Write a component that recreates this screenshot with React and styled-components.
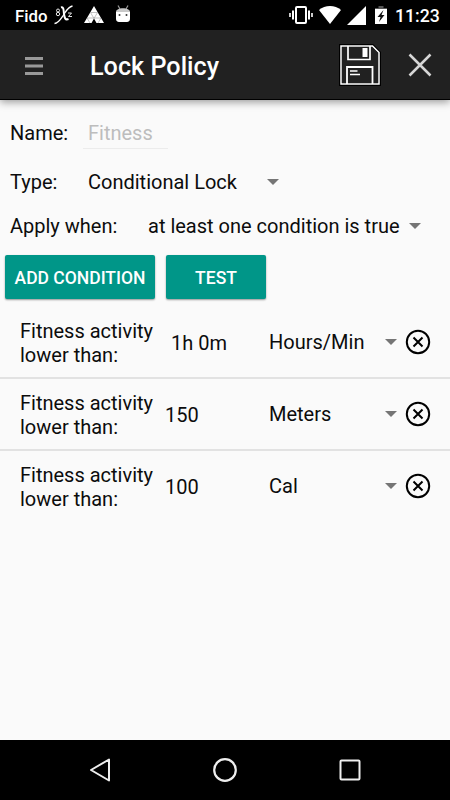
import React, { useState } from "react";
import styled, { createGlobalStyle } from "styled-components";

const GlobalStyle = createGlobalStyle`
    * {
        box-sizing: border-box;
    }
    body {
        margin: 0;
        background: #fafafa;
        font-family: Roboto, sans-serif;
    }
`;

const Screen = styled.div`
    width: 450px;
    height: 800px;
    display: flex;
    flex-direction: column;
    background: #fafafa;
    color: #0c0c0c;
    overflow: hidden;
`;

// Status bar
const StatusBar = styled.div`
    height: 30px;
    flex-shrink: 0;
    display: flex;
    align-items: center;
    padding: 0 10px 0 15px;
    background: #000;
    color: #fff;
    svg {
        display: block;
        flex-shrink: 0;
    }
`;

const Carrier = styled.span`
    width: 39px;
    font-size: 16.8px;
    font-weight: 500;
    line-height: 30px;
    white-space: nowrap;
    padding-top: 2px;
`;

const StatusIcons = styled.div`
    display: flex;
    align-items: center;
    margin-left: ${(props) => (props.$end ? "auto" : "0")};
    gap: ${(props) => props.$gap}px;
`;

const BatterySlot = styled.div`
    margin-left: 9px;
`;

const Clock = styled.span`
    width: 45px;
    margin-left: 8px;
    font-size: 17.7px;
    font-weight: 500;
    line-height: 30px;
    padding-top: 2px;
    white-space: nowrap;
`;

// Toolbar
const Toolbar = styled.header`
    height: 70px;
    flex-shrink: 0;
    display: flex;
    align-items: center;
    padding: 0 18px 0 25px;
    background: #212121;
    border-bottom: 1px solid #000;
    box-shadow: 0 2px 8px rgba(0, 0, 0, 0.4);
    z-index: 1;
`;

const Title = styled.h1`
    margin: 4px auto 0 47px;
    font-size: 25.2px;
    font-weight: 500;
    line-height: 30px;
    color: #fff;
`;

const IconButton = styled.button`
    display: flex;
    padding: 0;
    border: none;
    background: none;
    cursor: pointer;
    margin-left: ${(props) => props.$left || 0}px;
`;

// Form
const Main = styled.main`
    flex: 1;
    padding-top: 6px;
`;

const Field = styled.div`
    display: flex;
    align-items: center;
    height: ${(props) => props.$height || 44}px;
    padding-left: 10px;
    font-size: 20px;
    white-space: nowrap;
`;

const Label = styled.label`
    width: ${(props) => props.$width}px;
`;

const NameInput = styled.input`
    width: 85px;
    height: 32px;
    padding: 1px 0 0 5px;
    border: none;
    border-bottom: 1px solid #ececec;
    outline: none;
    background: none;
    font: 20px Roboto, sans-serif;
    color: #bdbdbd;
`;

const Select = styled.div`
    display: flex;
    align-items: center;
    justify-content: space-between;
    width: ${(props) => props.$width}px;
    font-size: 20px;
    white-space: nowrap;
    cursor: pointer;
`;

const Caret = styled.span`
    border: 6px solid transparent;
    border-top-color: #757575;
    border-bottom: none;
`;

const Actions = styled.div`
    display: flex;
    gap: 11px;
    padding: 7px 5px 6px;
`;

const ActionButton = styled.button`
    width: ${(props) => props.$width}px;
    height: 44px;
    padding: 2px 0 0;
    border: none;
    border-radius: 2px;
    background: #009688;
    color: #fff;
    font: 500 17.5px Roboto, sans-serif;
    white-space: nowrap;
    box-shadow: 0 1px 2px rgba(0, 0, 0, 0.4);
    cursor: pointer;
`;

// Conditions
const ConditionRow = styled.div`
    display: flex;
    align-items: center;
    height: 72px;
    padding-left: 20px;
    font-size: 20px;
    border-top: 2px solid transparent;
    & + & {
        border-top-color: #e2e2e2;
    }
`;

const ConditionName = styled.div`
    width: 145px;
    padding-top: 2px;
    line-height: 24px;
    white-space: pre-line;
`;

const ConditionValue = styled.div`
    width: 104px;
    padding-top: 2px;
    padding-left: ${(props) => (props.$indent ? 6 : 0)}px;
`;

// Navigation bar
const NavBar = styled.nav`
    height: 60px;
    flex-shrink: 0;
    display: flex;
    align-items: center;
    justify-content: space-between;
    padding: 0 87px;
    background: #000;
`;

const initialConditions = [
    { id: 1, value: "1h 0m", unit: "Hours/Min" },
    { id: 2, value: "150", unit: "Meters" },
    { id: 3, value: "100", unit: "Cal" },
];

function ChiIcon() {
    return (
        <svg width="19" height="20" viewBox="0 0 19 20" fill="none" stroke="#fff">
            <path d="M.5 18.500c4 0 6-4 9-8.500S14 2 18.500 1" strokeWidth="1.300" />
            <path d="M7 2.500c3-1 2.500 3 3 6.500s1 6.500 4.500 5" strokeWidth="2" />
            <circle cx="4" cy="5.500" r="1.500" strokeWidth=".9" />
            <circle cx="4" cy="9" r="1.700" strokeWidth=".9" />
            <path d="M14 8h3.500L14.500 11.500H18" strokeWidth=".9" />
        </svg>
    );
}

function TrianglesIcon() {
    return (
        <svg width="20" height="18" viewBox="0 0 20 18">
            <path d="M10 0 20 17H12.500L10 12.500 7.500 17H0z" fill="#fff" />
            <path d="M6.500 6.500 10 12.500l3.500-6zM3 12h7M17 12h-7M3 12l3 5M17 12l-3 5" fill="none" stroke="#999" strokeWidth=".6" />
        </svg>
    );
}

function AndroidIcon() {
    return (
        <svg width="16" height="20" viewBox="0 0 16 20">
            <path d="M3 .5 5 4M13 .5 11 4" stroke="#999" strokeWidth="1.200" />
            <path d="M1 7c0-5 14-5 14 0z" fill="#c8c8c8" />
            <path d="M1 7h14v6.500c0 4-3 3.500-7 3.500s-7 .5-7-3.500z" fill="#fff" />
            <circle cx="4.500" cy="10" r="1" fill="#333" />
            <circle cx="11.500" cy="10" r="1" fill="#333" />
        </svg>
    );
}

function VibrateIcon() {
    return (
        <svg width="24" height="18" viewBox="0 0 24 18" fill="none" stroke="#fff">
            <rect x="7" y="1" width="10" height="16" rx="1" strokeWidth="2" />
            <path d="M4 4.500v9M20 4.500v9" strokeWidth="2" />
            <path d="M1 7v4M23 7v4" strokeWidth="1.600" />
        </svg>
    );
}

function WifiIcon() {
    return (
        <svg width="22" height="18" viewBox="0 0 22 18" fill="#fff">
            <path d="M11 18 0 4C6-1.300 16-1.300 22 4z" />
        </svg>
    );
}

function SignalIcon() {
    return (
        <svg width="19" height="19" viewBox="0 0 19 19" fill="#fff">
            <path d="M19 0v19H0z" />
        </svg>
    );
}

function BatteryIcon() {
    return (
        <svg width="12" height="18" viewBox="0 0 12 18">
            <path d="M3.500 0h5v2H12v2H0V2h3.500z" fill="#555" />
            <path d="M0 3h12v15H0z" fill="#fff" />
            <path d="M8.500 4 2.500 11h3L4 16l5.500-7H6.500z" fill="#111" />
        </svg>
    );
}

function MenuIcon() {
    return (
        <svg width="18" height="20" viewBox="0 0 18 20" fill="#999">
            <path d="M0 2h18v3H0zM0 9.500h18v3H0zM0 17h18v3H0z" />
        </svg>
    );
}

function SaveIcon() {
    return (
        <svg width="42" height="42" viewBox="0 0 42 42" fill="none">
            <path d="M1.500 1.500h32L40.500 8.500v32h-39z" stroke="#000" strokeWidth="3" />
            <path d="M2 2h31.500L40 8.500V40H2z" stroke="#fff" strokeWidth="1.500" />
            <path d="M9 2v13.500h22V2" stroke="#fff" strokeWidth="1.700" />
            <path d="M23.500 4h5v9h-5z" fill="#fff" />
            <path d="M8 40V23h25.500v17" stroke="#fff" strokeWidth="1.800" />
            <path d="M11 27h7.500M11 30.500h10" stroke="#fff" strokeWidth="1.600" />
        </svg>
    );
}

function CloseIcon() {
    return (
        <svg width="24" height="24" viewBox="0 0 24 24">
            <path d="m1.500 1.500 21 21M22.500 1.500l-21 21" stroke="#d6d6d6" strokeWidth="2.500" />
        </svg>
    );
}

function RemoveIcon() {
    return (
        <svg width="26" height="26" viewBox="0 0 26 26" fill="none" stroke="#000" strokeWidth="2">
            <circle cx="13" cy="13" r="11.200" />
            <path d="m8.500 8.500 9 9M17.500 8.500l-9 9" />
        </svg>
    );
}

export default function App() {
    const [name, setName] = useState("Fitness");
    const [conditions, setConditions] = useState(initialConditions);

    const removeCondition = (id) => {
        setConditions(conditions.filter((condition) => condition.id !== id));
    };

    return (
        <>
            <GlobalStyle />
            <Screen>
                <StatusBar>
                    <Carrier>Fido</Carrier>
                    <StatusIcons $gap={11}>
                        <ChiIcon />
                        <TrianglesIcon />
                        <AndroidIcon />
                    </StatusIcons>
                    <StatusIcons $end $gap={6}>
                        <VibrateIcon />
                        <WifiIcon />
                        <SignalIcon />
                    </StatusIcons>
                    <BatterySlot>
                        <BatteryIcon />
                    </BatterySlot>
                    <Clock>11:23</Clock>
                </StatusBar>

                <Toolbar>
                    <IconButton aria-label="Menu">
                        <MenuIcon />
                    </IconButton>
                    <Title>Lock Policy</Title>
                    <IconButton aria-label="Save">
                        <SaveIcon />
                    </IconButton>
                    <IconButton aria-label="Close" $left={27}>
                        <CloseIcon />
                    </IconButton>
                </Toolbar>

                <Main>
                    <Field $height={54}>
                        <Label $width={73}>Name:</Label>
                        <NameInput value={name} onChange={(e) => setName(e.target.value)} />
                    </Field>
                    <Field>
                        <Label $width={78}>Type:</Label>
                        <Select $width={191}>
                            Conditional Lock <Caret />
                        </Select>
                    </Field>
                    <Field>
                        <Label $width={138}>Apply when:</Label>
                        <Select $width={273}>
                            at least one condition is true <Caret />
                        </Select>
                    </Field>

                    <Actions>
                        <ActionButton $width={150}>ADD CONDITION</ActionButton>
                        <ActionButton $width={100}>TEST</ActionButton>
                    </Actions>

                    {conditions.map((condition) => (
                        <ConditionRow key={condition.id}>
                            <ConditionName>{"Fitness activity\nlower than:"}</ConditionName>
                            <ConditionValue $indent={condition.value.includes("h")}>
                                {condition.value}
                            </ConditionValue>
                            <Select $width={128}>
                                {condition.unit} <Caret />
                            </Select>
                            <IconButton
                                aria-label="Remove"
                                $left={8}
                                onClick={() => removeCondition(condition.id)}
                            >
                                <RemoveIcon />
                            </IconButton>
                        </ConditionRow>
                    ))}
                </Main>

                <NavBar>
                    <svg width="26" height="26" viewBox="0 0 26 26" fill="none" stroke="#eee" strokeWidth="2" strokeLinejoin="round">
                        <path d="M22 2.500v21L4 13z" />
                    </svg>
                    <svg width="26" height="26" viewBox="0 0 26 26" fill="none" stroke="#eee" strokeWidth="2.200">
                        <circle cx="13" cy="13" r="10.800" />
                    </svg>
                    <svg width="26" height="26" viewBox="0 0 26 26" fill="none" stroke="#eee" strokeWidth="2">
                        <rect x="3.500" y="3.500" width="19" height="19" rx="1" />
                    </svg>
                </NavBar>
            </Screen>
        </>
    );
}
